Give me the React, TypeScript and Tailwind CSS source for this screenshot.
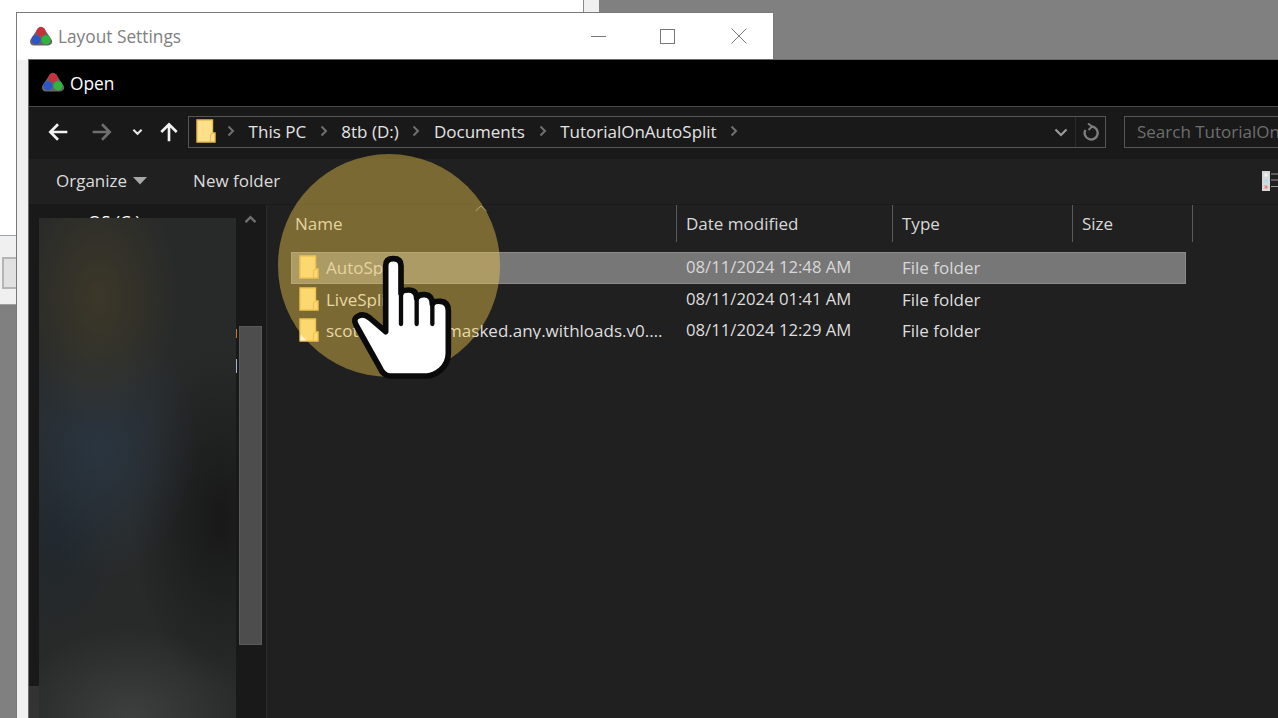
import React from "react";

const font = "font-['Open_Sans','Noto_Sans',sans-serif]";

function Logo() {
  return (
    <svg viewBox="0 0 24 24" className="w-[24px] h-[24px] shrink-0">
      <path d="M12 6 L19 16.5 H5 Z" fill="#3c3c3c" stroke="#666666" strokeWidth="8" strokeLinejoin="round" />
      <circle cx="12" cy="6.8" r="4.6" fill="#c8303c" />
      <circle cx="7" cy="14.8" r="4.6" fill="#2e55c8" />
      <circle cx="17" cy="14.8" r="4.6" fill="#2fb53a" />
    </svg>
  );
}

function Folder({ shortcut = false, className = "" }: { shortcut?: boolean; className?: string }) {
  return (
    <svg viewBox="0 0 20 24" className={className}>
      <path d="M1 1 H16.5 V14 H19 V23 H1 Z" fill="#ffe08a" stroke="#e8bd52" strokeWidth="1.4" />
      <path d="M16.5 14 L14.5 16 V23" fill="none" stroke="#e8bd52" strokeWidth="1.2" />
      {shortcut && <path d="M1.5 22.5 V17 L7.5 22.5 Z" fill="#fff6d8" />}
    </svg>
  );
}

function Sep() {
  return (
    <svg viewBox="0 0 8 12" className="w-[8px] h-[12px] shrink-0">
      <path d="M1.5 1.5 L6 6 L1.5 10.5" fill="none" stroke="#707070" strokeWidth="2" />
    </svg>
  );
}

function Crumb({ label }: { label: string }) {
  return (
    <>
      <span className="text-[#e4e4e4]">{label}</span>
      <Sep />
    </>
  );
}

function Row({ name, date, selected = false, shortcut = false }: { name: string; date: string; selected?: boolean; shortcut?: boolean }) {
  return (
    <div className={`h-[31.5px] w-[895px] flex items-center border ${selected ? "bg-[#777777] border-[#8a8a8a] text-[#d8d8d8]" : "border-transparent text-[#dedede]"}`}>
      <div className="w-[384px] flex items-center pl-[7px] shrink-0">
        <Folder shortcut={shortcut} className="w-[20px] h-[24px] shrink-0 -mt-[1px]" />
        <span className="ml-[7px] w-[342px] truncate">{name}</span>
      </div>
      <span className="w-[216px] pl-[10px] shrink-0 text-[16.7px]">{date}</span>
      <span className="pl-[10px]">File folder</span>
    </div>
  );
}

function HeaderCell({ label, w, pl = "pl-[9px]" }: { label: string; w: string; pl?: string }) {
  return (
    <div className={`${w} h-[37px] flex items-center border-r border-[#5a5a5a] shrink-0 ${pl}`}>
      <span className="text-[#d8d8d8]">{label}</span>
    </div>
  );
}

export default function App() {
  return (
    <div className={`relative w-[1278px] h-[718px] overflow-hidden bg-[#808080] text-[17px] leading-none ${font}`}>
      {/* Window behind */}
      <div className="absolute left-0 top-0 w-[599px] h-[305px] flex border-b border-[#a0a0a0]">
        <div className="w-[584px] flex flex-col border-r border-[#8a8a8a]">
          <div className="h-[236px] bg-white border-b border-[#9aa5ad]" />
          <div className="flex-1 bg-[#f0f0f0] pt-[21px] pl-[2px]">
            <div className="w-[40px] h-[32px] bg-[#e1e1e1] border-2 border-[#b5b5b5]" />
          </div>
        </div>
        <div className="flex-1 bg-[#f0f0f0]" />
      </div>

      {/* Layout Settings window */}
      <div className="absolute left-[16px] top-[12px] w-[758px] h-[720px] flex flex-col border border-[#7a7a7a] bg-[#f0f0f0]">
        <div className="h-[47px] bg-white flex items-center pl-[12px] text-[#808080]">
          <Logo />
          <span className="ml-[5px] mt-[1px] text-[17.3px]">Layout Settings</span>
          <div className="ml-auto flex items-center">
            <div className="w-[15px] h-px bg-[#777777] mr-[54px]" />
            <div className="w-[15px] h-[15px] border border-[#777777] mr-[56px] -mt-px" />
            <svg viewBox="0 0 16 16" className="w-[16px] h-[16px] mr-[26px] -mt-px">
              <path d="M.5.5 L15.5 15.5 M15.5.5 L.5 15.5" stroke="#777777" strokeWidth="1" />
            </svg>
          </div>
        </div>
      </div>

      {/* Open dialog */}
      <div className="absolute left-[28px] top-[59px] w-[1250px] h-[659px] flex flex-col overflow-hidden border-l border-t border-[#6a6a6a] bg-[#202020]">
        <div className="h-[47px] bg-black flex items-center pl-[12px] border-b border-[#4a4a4a] text-white shrink-0">
          <Logo />
          <span className="ml-[5px] mt-[1px] text-[17.3px]">Open</span>
        </div>

        <div className="h-[52px] bg-[#191919] flex items-start pt-[9px] shrink-0 pl-[18px]">
          <div className="h-[32px] flex items-center shrink-0">
            <svg viewBox="0 0 20 20" className="w-[22px] h-[22px] shrink-0">
              <path d="M18.5 10 H3 M10 3 L3 10 L10 17" fill="none" stroke="#f2f2f2" strokeWidth="2.4" />
            </svg>
            <svg viewBox="0 0 20 20" className="w-[22px] h-[22px] ml-[22px] shrink-0">
              <path d="M1.5 10 H17 M10 3 L17 10 L10 17" fill="none" stroke="#6e6e6e" strokeWidth="2.4" />
            </svg>
            <svg viewBox="0 0 12 8" className="w-[11px] h-[8px] ml-[19px] shrink-0">
              <path d="M1.5 1.5 L6 6 L10.5 1.5" fill="none" stroke="#e8e8e8" strokeWidth="2.2" />
            </svg>
            <svg viewBox="0 0 20 20" className="w-[22px] h-[22px] ml-[15px] shrink-0">
              <path d="M10 18.5 V3 M3 10 L10 3 L17 10" fill="none" stroke="#f2f2f2" strokeWidth="2.4" />
            </svg>
          </div>
          <div className="w-[918px] h-[32px] ml-[8px] border border-[#555555] flex items-center pl-[7px] shrink-0">
            <Folder className="w-[20px] h-[24px] shrink-0 mb-[3px]" />
            <div className="ml-[11px] mb-[2px] flex items-center gap-[13.6px] whitespace-nowrap">
              <Sep />
              <Crumb label="This PC" />
              <Crumb label="8tb (D:)" />
              <Crumb label="Documents" />
              <Crumb label="TutorialOnAutoSplit" />
            </div>
            <svg viewBox="0 0 14 9" className="w-[14px] h-[9px] ml-auto mr-[7px] shrink-0">
              <path d="M1.5 1.5 L7 7 L12.5 1.5" fill="none" stroke="#9a9a9a" strokeWidth="2.2" />
            </svg>
            <div className="w-[30px] h-full border-l border-[#2a2a2a] flex items-center justify-center shrink-0">
              <svg viewBox="0 0 18 18" className="w-[18px] h-[18px]">
                <path d="M9.5 3.5 A6.5 6.5 0 1 1 3.4 7" fill="none" stroke="#7c7c7c" strokeWidth="2.4" />
                <path d="M6 0.5 L10 3.5 L6.5 7" fill="none" stroke="#7c7c7c" strokeWidth="2" />
              </svg>
            </div>
          </div>
          <div className="w-[200px] h-[32px] ml-[18px] border border-[#555555] flex items-center pl-[12px] pb-[2px] shrink-0 text-[#6e6e6e] whitespace-nowrap overflow-hidden">
            Search TutorialOnAutoSplit
          </div>
        </div>

        <div className="h-[46px] bg-[#202020] border-b border-[#1a1a1a] flex items-center pb-[2px] shrink-0 pl-[27px] text-[#dcdcdc]">
          <span>Organize</span>
          <svg viewBox="0 0 14 8" className="w-[14px] h-[8px] ml-[6px] shrink-0">
            <path d="M0 0 H14 L7 7.5 Z" fill="#a8a8a8" />
          </svg>
          <span className="ml-[46px]">New folder</span>
          <svg viewBox="0 0 16 20" className="w-[16px] h-[20px] ml-auto shrink-0">
            <rect x="0" y="0" width="8" height="20" fill="#d8d8d8" />
            <rect x="2.5" y="2.5" width="3" height="3" fill="#f4f4f4" />
            <rect x="2.5" y="8.5" width="3" height="3" fill="#a6dcf8" />
            <rect x="2.5" y="14.5" width="3" height="3" fill="#e88a7a" />
            <path d="M9 3 H16 M9 9 H16 M9 15.5 H16" stroke="#9a9a9a" strokeWidth="1.2" />
          </svg>
        </div>

        <div className="flex-1 flex min-h-0">
          <aside className="w-[238px] bg-[#191919] border-r border-[#2b2b2b] flex shrink-0">
            <div className="flex-1 flex flex-col min-w-0">
              <div className="pl-[59px] pt-[8px] text-white whitespace-nowrap">OS (C:)</div>
              <div className="mt-auto w-[10px] h-[32px] bg-[#333333]" />
            </div>
            <div className="w-[24px] mr-[4px] flex flex-col items-center shrink-0">
              <svg viewBox="0 0 14 10" className="w-[13px] h-[9px] mt-[10px] shrink-0">
                <path d="M1.5 8 L7 2.5 L12.5 8" fill="none" stroke="#707070" strokeWidth="2.6" />
              </svg>
              <div className="mt-[102px] w-[23px] h-[319px] bg-[#4d4d4d] border border-[#5a5a5a]" />
            </div>
          </aside>
          <main className="flex-1 min-w-0 pl-[24px]">
            <div className="flex mb-[10px]">
              <HeaderCell label="Name" w="w-[386px]" pl="pl-[4px]" />
              <HeaderCell label="Date modified" w="w-[216px]" />
              <HeaderCell label="Type" w="w-[180px]" />
              <HeaderCell label="Size" w="w-[120px]" />
            </div>
            <Row name="AutoSplit" date="08/11/2024 12:48 AM" selected />
            <Row name="LiveSplit" date="08/11/2024 01:41 AM" />
            <Row name="scotti.witcher3.masked.any.withloads.v0.0.1" date="08/11/2024 12:29 AM" shortcut />
          </main>
        </div>
      </div>

      {/* Blurred patch over the navigation pane */}
      <div className="absolute left-[39px] top-[218px] w-[197px] h-[500px] bg-[#282a2a] bg-[radial-gradient(ellipse_80px_130px_at_30%_16%,rgba(62,57,40,0.9),transparent),radial-gradient(ellipse_100px_130px_at_30%_46%,rgba(42,54,66,0.9),transparent),radial-gradient(ellipse_60px_110px_at_10%_62%,rgba(30,38,44,0.9),transparent),radial-gradient(ellipse_90px_170px_at_92%_60%,rgba(24,24,24,1),transparent),radial-gradient(ellipse_120px_90px_at_46%_100%,rgba(64,65,65,0.9),transparent)]" />
      <div className="absolute left-[236px] top-[329px] w-px h-[9px] bg-[#c87a1e]" />
      <div className="absolute left-[236px] top-[359px] w-px h-[14px] bg-[#9fb4d0]" />

      {/* Click highlight */}
      <div className="absolute left-[278px] top-[154px] w-[222px] h-[223px] rounded-full bg-[rgba(248,206,77,0.425)]" />

      {/* Hand cursor */}
      <svg viewBox="0 0 720 720" className="absolute left-[270px] top-[150px] w-[240px] h-[240px]">
        <path
          d="M347 545 V347 Q347 326 370 326 Q393 326 393 347 V430 Q393 420 415 420 Q440 420 440 445 Q445 432 465 434 Q487 436 487 462 Q492 452 512 454 Q535 456 535 482 V610 Q535 640 512 660 Q490 678 470 678 H360 Q340 678 328 650 L258 525 Q248 505 265 498 Q280 490 298 503 Z"
          fill="#ffffff"
          stroke="#0a0a0a"
          strokeWidth="17"
          strokeLinejoin="round"
        />
        <path d="M393 430 V522 M440 445 V522 M487 462 V522" fill="none" stroke="#0a0a0a" strokeWidth="13" strokeLinecap="round" />
      </svg>

      {/* Sort caret */}
      <svg viewBox="0 0 12 7" className="absolute left-[475px] top-[205px] w-[12px] h-[7px]">
        <path d="M.5 6 L6 1 L11.5 6" fill="none" stroke="#b8a870" strokeWidth="1" />
      </svg>
    </div>
  );
}
